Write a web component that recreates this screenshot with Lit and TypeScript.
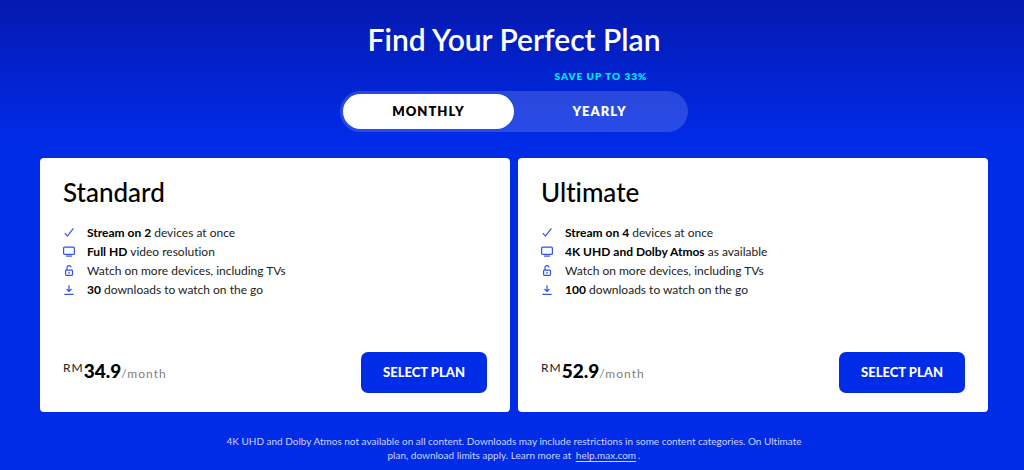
import { LitElement, html, css, svg } from "lit";
import { customElement, property, state } from "lit/decorators.js";

type IconName = "check" | "screen" | "lock" | "download";

interface Feature {
  icon: IconName;
  strong?: string;
  text: string;
}

interface Plan {
  name: string;
  price: string;
  features: Feature[];
}

const plans: Plan[] = [
  {
    name: "Standard",
    price: "34.9",
    features: [
      { icon: "check", strong: "Stream on 2", text: "devices at once" },
      { icon: "screen", strong: "Full HD", text: "video resolution" },
      { icon: "lock", text: "Watch on more devices, including TVs" },
      { icon: "download", strong: "30", text: "downloads to watch on the go" },
    ],
  },
  {
    name: "Ultimate",
    price: "52.9",
    features: [
      { icon: "check", strong: "Stream on 4", text: "devices at once" },
      { icon: "screen", strong: "4K UHD and Dolby Atmos", text: "as available" },
      { icon: "lock", text: "Watch on more devices, including TVs" },
      { icon: "download", strong: "100", text: "downloads to watch on the go" },
    ],
  },
];

const icons = {
  check: svg`<path d="M1.8 6.2 4.4 9.1 10.4 1.4" />`,
  screen: svg`<rect x=".6" y="1.1" width="10.8" height="7.3" rx="1" /><path d="M3 10.1h6" />`,
  lock: svg`<rect x="2.6" y="5.1" width="6.9" height="5.3" rx=".8" /><path d="M4 5V2.8a2 2 0 0 1 4-.4M5.2 7.8h1.7" />`,
  download: svg`<path d="M1.4 10.4h9.2M6 1.2v6.2M3.5 5 6 7.5 8.5 5" />`,
};

@customElement("plan-card")
export class PlanCard extends LitElement {
  @property({ attribute: false }) plan!: Plan;

  static styles = css`
    :host {
      display: flex;
      flex-direction: column;
      justify-content: space-between;
      gap: 53px;
      box-sizing: border-box;
      padding: 19px 23px;
      border-radius: 4px;
      background: #fff;
      color: #000;
    }
    .name {
      margin: 0 0 15px;
      font-size: 26px;
      line-height: 31px;
      font-weight: 500;
    }
    .features {
      margin: 0;
      padding: 0;
      list-style: none;
      font-size: 12px;
      line-height: 19px;
    }
    .feature {
      display: flex;
      align-items: center;
      gap: 12px;
    }
    .icon {
      flex: none;
      width: 12px;
      height: 12px;
      fill: none;
      stroke: #3152ee;
      stroke-width: 1.2;
    }
    .label {
      color: #222;
    }
    .strong {
      color: #000;
      font-weight: 700;
    }
    .footer {
      display: flex;
      align-items: center;
      justify-content: space-between;
    }
    .price {
      display: flex;
      align-items: baseline;
      margin: 0;
      line-height: 26px;
    }
    .currency {
      align-self: flex-start;
      color: #222;
      font-size: 12px;
      line-height: 20px;
      letter-spacing: 1px;
    }
    .amount {
      font-size: 19px;
      font-weight: 900;
    }
    .period {
      color: #808080;
      font-size: 12px;
      letter-spacing: 1px;
    }
    .select {
      padding: 0 22px;
      border: 0;
      border-radius: 7px;
      background: #002be7;
      color: #fff;
      font: inherit;
      font-size: 13px;
      line-height: 41px;
      font-weight: 900;
      cursor: pointer;
    }
  `;

  render() {
    const { name, price, features } = this.plan;
    return html`
      <div>
        <h2 class="name">${name}</h2>
        <ul class="features">
          ${features.map(
            (f) => html`<li class="feature">
              <svg class="icon" viewBox="0 0 12 12" aria-hidden="true">${icons[f.icon]}</svg>
              <span class="label">${f.strong ? html`<b class="strong">${f.strong}</b> ` : ""}${f.text}</span>
            </li>`
          )}
        </ul>
      </div>
      <div class="footer">
        <p class="price">
          <span class="currency">RM</span><span class="amount">${price}</span><span class="period">/month</span>
        </p>
        <button class="select" type="button">SELECT PLAN</button>
      </div>
    `;
  }
}

@customElement("app-root")
export class AppRoot extends LitElement {
  @state() private billing = "monthly";

  static styles = css`
    :host {
      display: block;
      box-sizing: border-box;
      min-height: 100vh;
      padding: 21px 36px 7px 40px;
      background: #002be7 linear-gradient(#0519b0, #002be7 140px) no-repeat;
      color: #fff;
      font-family: Lato, "Open Sans", sans-serif;
      font-variant-ligatures: none;
    }
    .header {
      display: flex;
      flex-direction: column;
      align-items: center;
    }
    .title {
      margin: 0 0 12px;
      font-size: 30px;
      line-height: 36px;
      font-weight: 600;
      text-align: center;
    }
    .billing {
      display: grid;
      grid-template-columns: 1fr 1fr;
      width: 100%;
      max-width: 348px;
      margin: 0;
      padding: 0;
      border: 0;
    }
    .saving {
      grid-column: 2;
      margin-bottom: 8px;
      color: #00e5ff;
      font-size: 10px;
      line-height: 14px;
      font-weight: 800;
      letter-spacing: 1px;
      text-align: center;
    }
    .toggle {
      grid-column: 1 / -1;
      display: grid;
      grid-template-columns: 1fr 1fr;
      padding: 3px;
      border-radius: 21px;
      background: rgba(255, 255, 255, 0.16);
    }
    .option {
      display: block;
      border-radius: 18px;
      font-size: 13px;
      line-height: 35px;
      font-weight: 800;
      letter-spacing: 1px;
      text-align: center;
      cursor: pointer;
    }
    .option:has(.radio:checked) {
      background: #fff;
      color: #000;
    }
    .option:has(.radio:focus-visible) {
      outline: 2px solid #00e5ff;
    }
    .radio {
      appearance: none;
      position: absolute;
      margin: 0;
      outline: none;
    }
    .plans {
      display: grid;
      grid-template-columns: repeat(auto-fit, minmax(min(100%, 340px), 1fr));
      gap: 8px;
      margin-top: 26px;
    }
    .note {
      max-width: 592px;
      margin: 22px auto 0;
      color: #ccd5fa;
      font-size: 10px;
      line-height: 14px;
      text-align: center;
    }
    .link {
      margin: 0 2px;
      color: inherit;
      text-underline-offset: 2px;
    }
  `;

  private option(value: string, label: string) {
    return html`<label class="option">
      <input
        class="radio"
        type="radio"
        name="billing"
        value=${value}
        .checked=${this.billing === value}
        @change=${() => (this.billing = value)}
      />${label}
    </label>`;
  }

  render() {
    return html`
      <header class="header">
        <h1 class="title">Find Your Perfect Plan</h1>
        <fieldset class="billing" aria-label="Billing period">
          <span class="saving">SAVE UP TO 33%</span>
          <div class="toggle">${this.option("monthly", "MONTHLY")}${this.option("yearly", "YEARLY")}</div>
        </fieldset>
      </header>
      <main class="plans">${plans.map((plan) => html`<plan-card .plan=${plan}></plan-card>`)}</main>
      <p class="note">
        4K UHD and Dolby Atmos not available on all content. Downloads may include restrictions in some content
        categories. On Ultimate plan, download limits apply. Learn more at
        <a class="link" href="https://help.max.com">help.max.com</a>.
      </p>
    `;
  }
}
